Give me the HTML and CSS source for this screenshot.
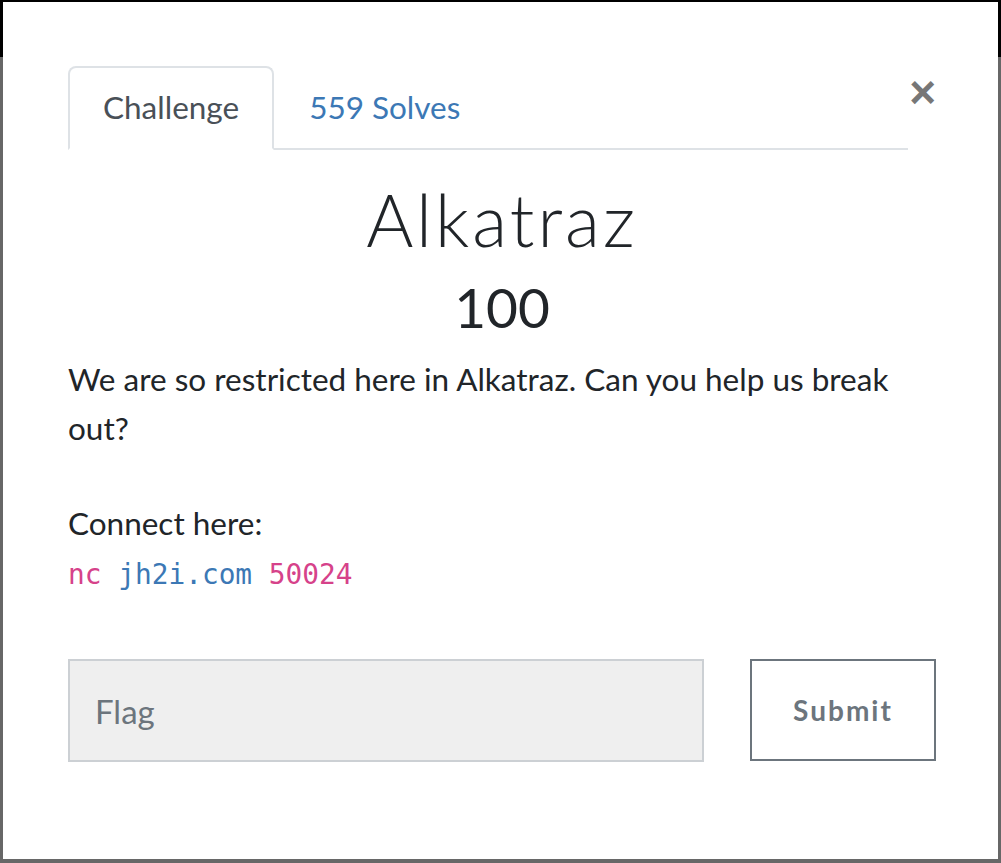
FILE: index.html
```html
<!DOCTYPE html>
<html lang="en">
<head>
    <meta charset="UTF-8">
    <title>Alkatraz</title>
    <link rel="stylesheet" href="styles.css">
</head>
<body>

<div class="page">
    <div class="navbar"></div>
</div>

<div class="modal">
    <div class="modal-body">
        <div class="tabs-row">
            <ul class="nav-tabs">
                <li class="active">Challenge</li>
                <li><a href="#">559 Solves</a></li>
            </ul>
            <button class="close">&times;</button>
        </div>

        <h2 class="title">Alkatraz</h2>
        <h3 class="value">100</h3>

        <div class="desc">
            <p>We are so restricted here in Alkatraz. Can you help us break out?</p>
            <p>Connect here:<br><code>nc <a href="#">jh2i.com</a> 50024</code></p>
        </div>

        <form class="flag-row">
            <input type="text" class="flag-input" placeholder="Flag">
            <button type="button" class="submit">Submit</button>
        </form>
    </div>
</div>

</body>
</html>
```

FILE: styles.css
```css
* {
    margin: 0;
    padding: 0;
    box-sizing: border-box;
    list-style: none;
}

body {
    background-color: #676767;
    font-family: "Lato", "Liberation Sans", sans-serif;
    color: #212529;
    overflow: hidden;
}

.page {
    height: 863px;
}

.navbar {
    height: 57px;
    background-color: #000;
}

/* modal sits over the dimmed page */
.modal {
    position: absolute;
    left: 3px;
    top: 2px;
    width: 995px;
    height: 857px;
    background-color: #fff;
}

.modal-body {
    padding: 64px 62px 0 65px;
}

.tabs-row {
    display: flex;
    align-items: flex-start;
}

.nav-tabs {
    flex: 1;
    display: flex;
    border-bottom: 2px solid #dee2e6;
    height: 84px;
}

.nav-tabs li {
    height: 84px;
    padding: 0 33px;
    font-size: 31.5px;
    line-height: 79px;
    border: 2px solid transparent;
    border-top-left-radius: 8px;
    border-top-right-radius: 8px;
}

.nav-tabs li.active {
    color: #495057;
    background-color: #fff;
    border-color: #dee2e6 #dee2e6 #fff;
}

.nav-tabs a {
    color: #3c78b5;
    text-decoration: none;
}

.close {
    width: 28px;
    margin-top: 3px;
    background: none;
    border: none;
    font-family: "Liberation Sans", sans-serif;
    font-size: 46px;
    font-weight: bold;
    line-height: 1;
    color: #777;
    text-align: right;
}

.title {
    margin-top: 26px;
    text-align: center;
    font-size: 72px;
    font-weight: 300;
    letter-spacing: 3px;
    line-height: 1.2;
}

.value {
    text-align: center;
    font-size: 55px;
    font-weight: 400;
    line-height: 1.2;
    margin-top: 12px;
}

.desc {
    margin-top: 15px;
    font-size: 31.5px;
    line-height: 49px;
}

.desc p {
    margin-bottom: 46px;
}

.desc code {
    font-family: "DejaVu Sans Mono", "Liberation Mono", monospace;
    font-size: 27.8px;
    color: #d6428a;
}

.desc code a {
    color: #3c78b5;
    text-decoration: none;
}

.flag-row {
    display: flex;
    margin-top: 60px;
    width: 868px;
}

.flag-input {
    width: 636px;
    height: 103px;
    background-color: #efefef;
    border: 2px solid #ccd0d4;
    padding: 0 25px;
    font-family: "Lato", sans-serif;
    font-size: 33px;
    color: #495057;
    outline: none;
}

.flag-input::placeholder {
    color: #6c757d;
}

.submit {
    margin-left: 46px;
    width: 186px;
    height: 102px;
    background-color: #fff;
    border: 2px solid #6c757d;
    font-family: "Lato", sans-serif;
    font-size: 28px;
    font-weight: bold;
    letter-spacing: 2px;
    color: #6c757d;
}
```
